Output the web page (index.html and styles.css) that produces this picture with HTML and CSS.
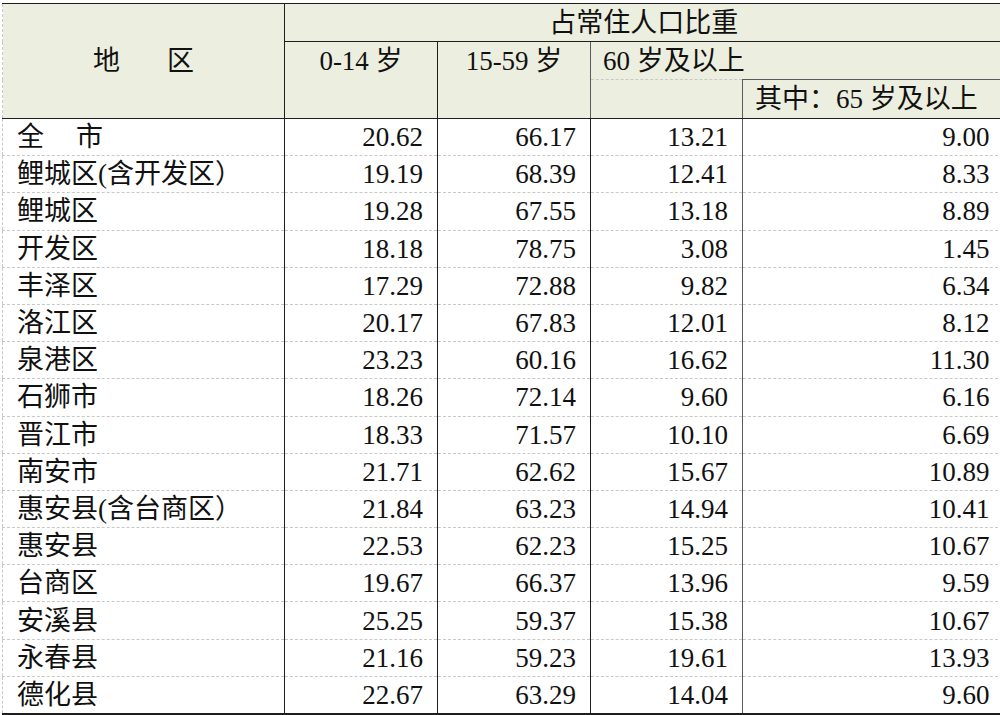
FILE: index.html
```html
<!DOCTYPE html>
<html lang="zh-CN">
<head>
<meta charset="utf-8">
<title>占常住人口比重</title>
<link rel="stylesheet" href="styles.css">
</head>
<body>
<table class="t">
  <colgroup>
    <col class="c0"><col class="c1"><col class="c2"><col class="c3"><col class="c4">
  </colgroup>
  <thead>
    <tr class="h1">
      <th rowspan="3" class="region">地<span class="sp2">　</span>区</th>
      <th colspan="4" class="top">占常住人口比重</th>
    </tr>
    <tr class="h2">
      <th rowspan="2" class="age a1">0-14 岁</th>
      <th rowspan="2" class="age a2">15-59 岁</th>
      <th colspan="2" class="old">60 岁及以上</th>
    </tr>
    <tr class="h3">
      <th class="blank"></th>
      <th class="sub">其中：65 岁及以上</th>
    </tr>
  </thead>
  <tbody>
    <tr><td class="name">全<span class="sp1">　</span>市</td><td>20.62</td><td>66.17</td><td class="g">13.21</td><td class="g">9.00</td></tr>
    <tr><td class="name">鲤城区(含开发区）</td><td>19.19</td><td>68.39</td><td class="g">12.41</td><td class="g">8.33</td></tr>
    <tr><td class="name">鲤城区</td><td>19.28</td><td>67.55</td><td class="g">13.18</td><td class="g">8.89</td></tr>
    <tr><td class="name">开发区</td><td>18.18</td><td>78.75</td><td class="g">3.08</td><td class="g">1.45</td></tr>
    <tr><td class="name">丰泽区</td><td>17.29</td><td>72.88</td><td class="g">9.82</td><td class="g">6.34</td></tr>
    <tr><td class="name">洛江区</td><td>20.17</td><td>67.83</td><td class="g">12.01</td><td class="g">8.12</td></tr>
    <tr><td class="name">泉港区</td><td>23.23</td><td>60.16</td><td class="g">16.62</td><td class="g">11.30</td></tr>
    <tr><td class="name">石狮市</td><td>18.26</td><td>72.14</td><td class="g">9.60</td><td class="g">6.16</td></tr>
    <tr><td class="name">晋江市</td><td>18.33</td><td>71.57</td><td class="g">10.10</td><td class="g">6.69</td></tr>
    <tr><td class="name">南安市</td><td>21.71</td><td>62.62</td><td class="g">15.67</td><td class="g">10.89</td></tr>
    <tr><td class="name">惠安县(含台商区）</td><td>21.84</td><td>63.23</td><td class="g">14.94</td><td class="g">10.41</td></tr>
    <tr><td class="name">惠安县</td><td>22.53</td><td>62.23</td><td class="g">15.25</td><td class="g">10.67</td></tr>
    <tr><td class="name">台商区</td><td>19.67</td><td>66.37</td><td class="g">13.96</td><td class="g">9.59</td></tr>
    <tr><td class="name">安溪县</td><td>25.25</td><td>59.37</td><td class="g">15.38</td><td class="g">10.67</td></tr>
    <tr><td class="name">永春县</td><td>21.16</td><td>59.23</td><td class="g">19.61</td><td class="g">13.93</td></tr>
    <tr class="last"><td class="name">德化县</td><td>22.67</td><td>63.29</td><td class="g">14.04</td><td class="g">9.60</td></tr>
  </tbody>
</table>
</body>
</html>
```

FILE: styles.css
```css
html, body {
  margin: 0;
  padding: 0;
  background: #ffffff;
}

body {
  padding: 3px 0 0 2px;
  font-family: "Liberation Serif", "Noto Sans CJK SC", serif;
  font-size: 27px;
  color: #111111;
}

.t {
  border-collapse: collapse;
  table-layout: fixed;
  width: 1000px;
  border-top: 1px solid #1e1e1e;
  border-left: 1px dashed #c8c8c8;
}

.c0 { width: 282px; }
.c1 { width: 153px; }
.c2 { width: 153px; }
.c3 { width: 152px; }
.c4 { width: 260px; }

th {
  font-weight: normal;
  background: #eceedf;
  padding: 0;
  line-height: 30px;
}

.h1 { height: 38px; }
.h2 { height: 38px; }
.h3 { height: 39px; }

.region {
  text-align: center;
  vertical-align: middle;
  border-right: 1px solid #1e1e1e;
  border-bottom: 1px solid #1e1e1e;
}

.sp2 { letter-spacing: 20px; }
.sp1 { letter-spacing: 5px; }

.top {
  text-align: center;
  vertical-align: middle;
  border-bottom: 1px solid #1e1e1e;
}

.age {
  text-align: center;
  vertical-align: top;
  padding-top: 4px;
  border-bottom: 1px solid #1e1e1e;
}

.a1 { border-right: 1px solid #1e1e1e; }
.a2 { border-right: 1px solid #5a5a5a; }

.old {
  text-align: left;
  vertical-align: middle;
  padding-left: 12px;
  border-bottom: 1px dashed #c8c8c8;
}

.blank {
  border-bottom: 1px solid #1e1e1e;
}

.sub {
  text-align: left;
  vertical-align: middle;
  padding-left: 12px;
  border-top: 1px solid #5a5a5a;
  border-left: 1px solid #5a5a5a;
  border-bottom: 1px solid #1e1e1e;
}

tbody tr {
  height: 37.2px;
}

td {
  padding: 0 14px 0 0;
  text-align: right;
  vertical-align: middle;
  line-height: 30px;
  border-bottom: 1px dashed #c8c8c8;
  border-right: 1px solid #1e1e1e;
  white-space: nowrap;
}

td.g {
  border-right: 1px solid #5a5a5a;
}

td.g:last-child {
  border-right: none;
  padding-right: 13px;
}

td.name {
  text-align: left;
  padding: 0 0 0 14px;
  border-right: 1px solid #1e1e1e;
}

tr.last td {
  border-bottom: 2px solid #1e1e1e;
}
```
